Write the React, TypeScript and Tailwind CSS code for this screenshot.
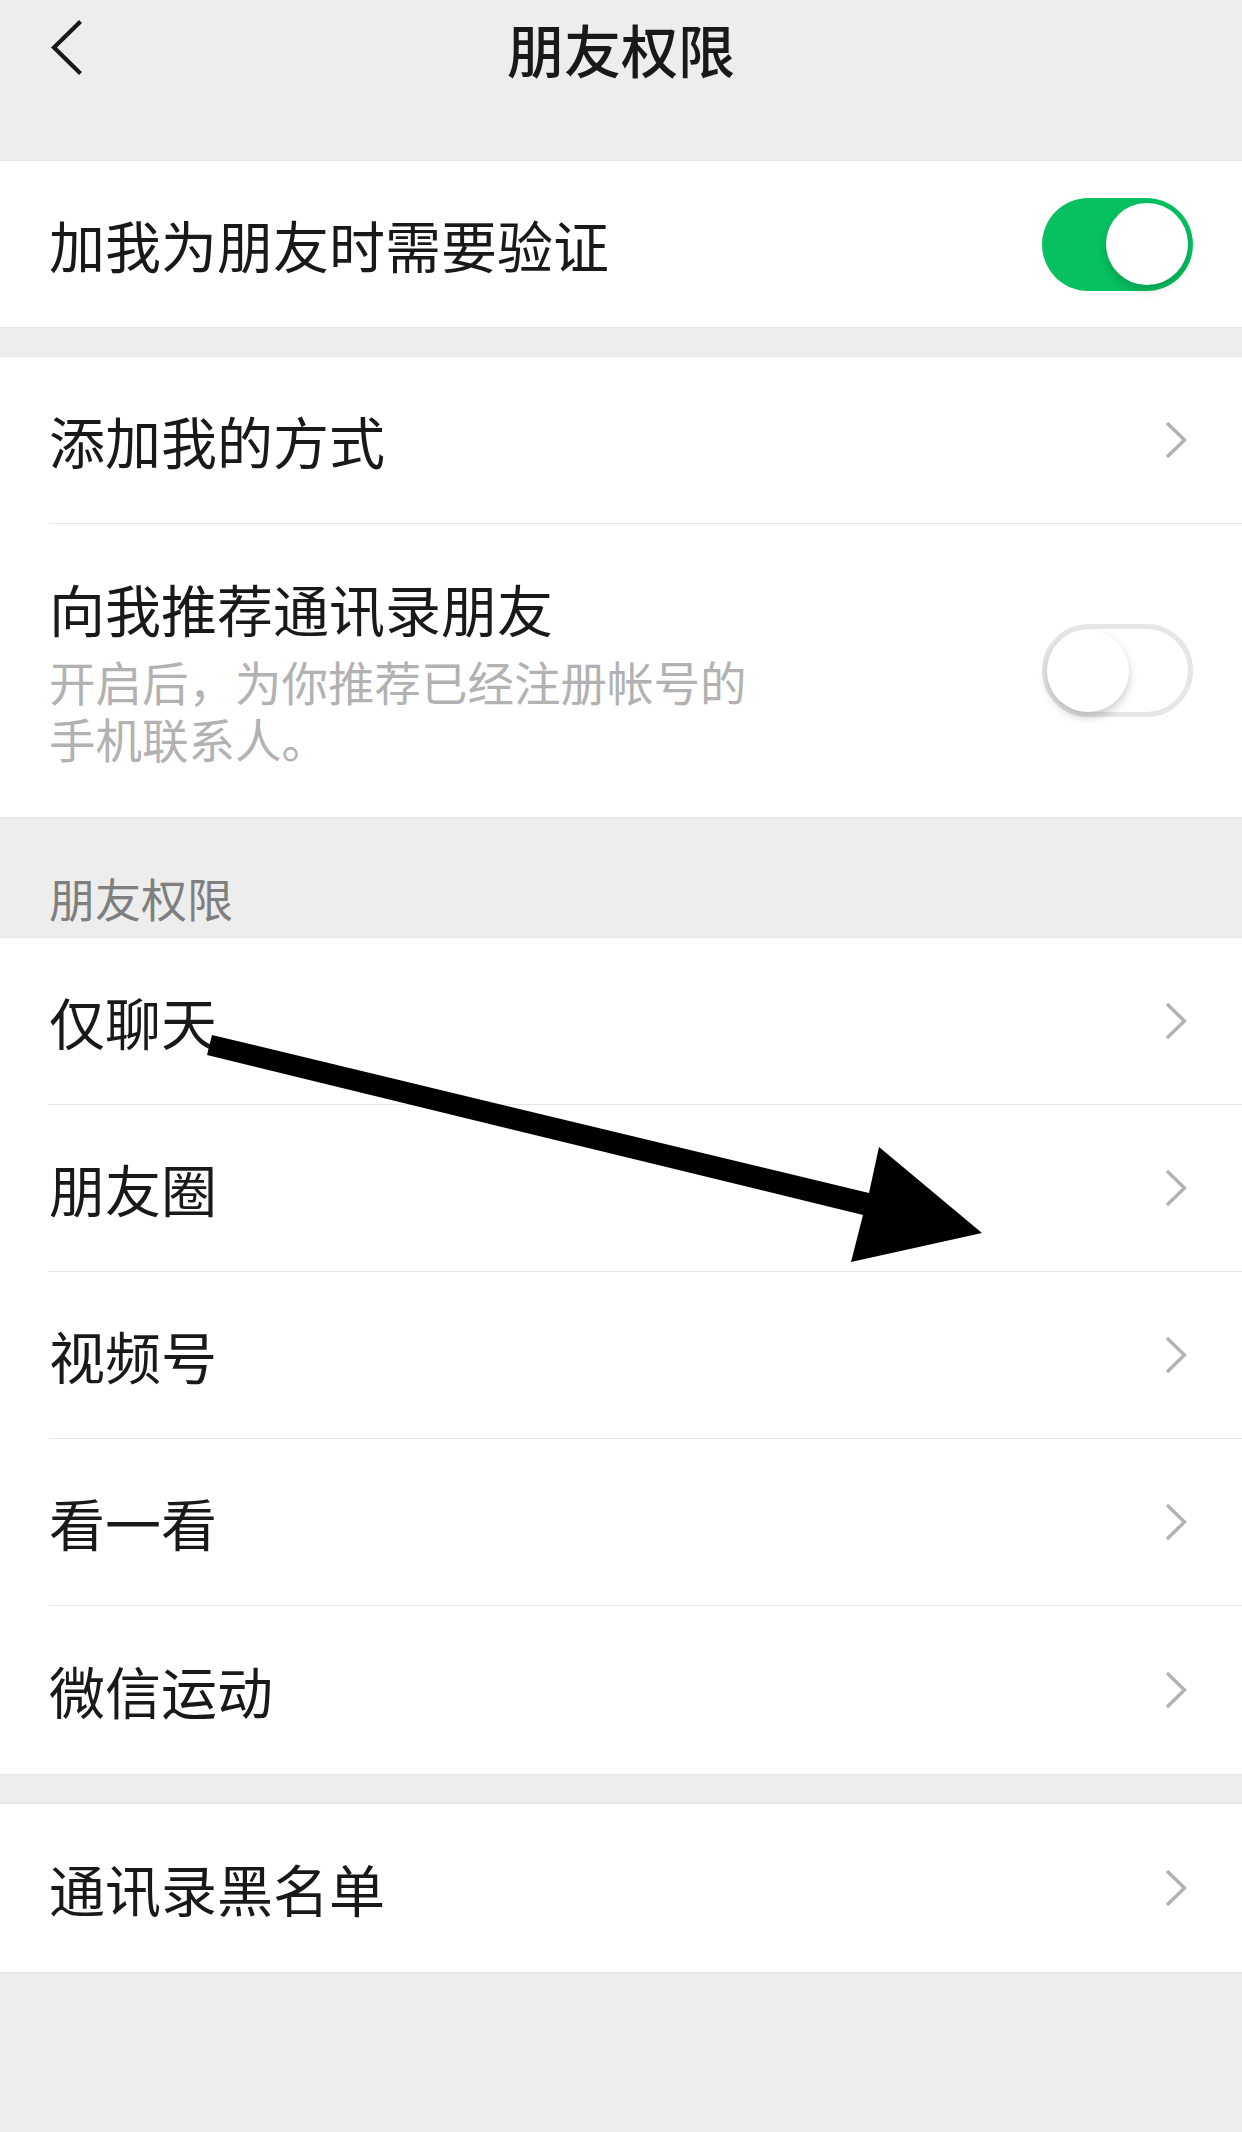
import React from "react";

const font = {
  fontFamily: '"Noto Sans CJK SC", "Noto Sans", sans-serif',
};

function Chevron() {
  return (
    <svg width="24" height="40" viewBox="0 0 24 40" className="shrink-0">
      <path d="M3 3 L20.5 20 L3 37" fill="none" stroke="#b2b2b2" strokeWidth="3.4" strokeLinecap="butt" strokeLinejoin="miter" />
    </svg>
  );
}

function Toggle({ on }: { on: boolean }) {
  if (on) {
    return (
      <div className="w-[151px] h-[93px] rounded-full bg-[#07c160] flex items-center justify-end pr-[5px] shrink-0">
        <div className="w-[82px] h-[82px] rounded-full bg-white shadow-[0_5px_10px_rgba(0,0,0,0.18)]" />
      </div>
    );
  }
  return (
    <div className="w-[151px] h-[93px] rounded-full bg-white border-[5px] border-[#e6e6e6] flex items-center shrink-0">
      <div className="w-[82px] h-[82px] rounded-full bg-white shadow-[0_5px_10px_rgba(0,0,0,0.2)]" />
    </div>
  );
}

function ArrowRow({ label, last }: { label: string; last?: boolean }) {
  return (
    <div className="pl-[49px]">
      <div
        className={
          "flex items-center justify-between pr-[54px] " +
          (last ? "h-[168px]" : "h-[167px] border-b border-[#e5e5e5]")
        }
      >
        <span className="text-[56px] leading-none text-[#191919]">{label}</span>
        <Chevron />
      </div>
    </div>
  );
}

export default function App() {
  return (
    <div className="relative w-full min-h-[2132px] bg-[#ededed]" style={font}>
      {/* Nav */}
      <div className="h-[96px] grid grid-cols-[1fr_auto_1fr] items-center">
        <div className="pl-[49px] flex items-center">
          <svg width="34" height="58" viewBox="0 0 34 58">
            <path d="M30 4 L5 28.5 L30 53" fill="none" stroke="#191919" strokeWidth="4.2" strokeLinecap="square" strokeLinejoin="miter" />
          </svg>
        </div>
        <div className="text-[57px] leading-none font-medium text-[#191919]">朋友权限</div>
        <div />
      </div>
      <div className="h-[64px]" />

      {/* Section 1 */}
      <div className="bg-white border-y border-[#e5e5e5]">
        <div className="h-[166px] pl-[49px] pr-[49px] flex items-center justify-between">
          <span className="text-[56px] leading-none text-[#191919]">加我为朋友时需要验证</span>
          <Toggle on />
        </div>
      </div>

      <div className="h-[28px]" />

      {/* Section 2 */}
      <div className="bg-white border-y border-[#e5e5e5]">
        <ArrowRow label="添加我的方式" />
        <div className="h-[293px] pl-[49px] pr-[49px] flex items-center justify-between">
          <div className="flex flex-col">
            <span className="text-[56px] leading-[64px] text-[#191919]">向我推荐通讯录朋友</span>
            <span className="mt-[12px] w-[710px] text-[46.5px] leading-[57px] text-[#b2b2b2]">
              开启后，为你推荐已经注册帐号的手机联系人。
            </span>
          </div>
          <Toggle on={false} />
        </div>
      </div>

      {/* Section header */}
      <div className="h-[119px] pl-[49px] pt-[38px] flex items-center">
        <span className="text-[46px] leading-none text-[#7f7f7f]">朋友权限</span>
      </div>

      {/* Section 3 */}
      <div className="bg-white border-y border-[#e5e5e5]">
        <ArrowRow label="仅聊天" />
        <ArrowRow label="朋友圈" />
        <ArrowRow label="视频号" />
        <ArrowRow label="看一看" />
        <ArrowRow label="微信运动" last />
      </div>

      <div className="h-[28px]" />

      {/* Section 4 */}
      <div className="bg-white border-y border-[#e5e5e5]">
        <ArrowRow label="通讯录黑名单" last />
      </div>

      {/* Annotation arrow overlay */}
      <svg
        className="absolute left-0 top-0 pointer-events-none"
        width="1242"
        height="2132"
        viewBox="0 0 1242 2132"
      >
        <polygon
          points="212,1035 869,1193 879,1147 982,1233 851,1262 863,1215 207,1055"
          fill="#000"
        />
      </svg>
    </div>
  );
}
